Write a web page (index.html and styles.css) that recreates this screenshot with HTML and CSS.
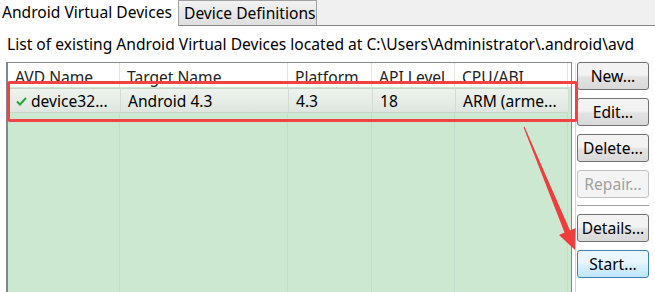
FILE: index.html
```html
<!DOCTYPE html>
<html lang="en">
<head>
  <meta charset="UTF-8" />
  <title>Android Virtual Device Manager</title>
  <link rel="stylesheet" href="styles.css">
</head>
<body>
  <div class="tabs">
    <div class="tab active">Android Virtual Devices</div>
    <div class="tab">Device Definitions</div>
    <div class="tab-rest"></div>
  </div>
  <div class="content">
    <div class="caption">List of existing Android Virtual Devices located at C:\Users\Administrator\.android\avd</div>
    <div class="main">
      <div class="table">
        <div class="row head">
          <div class="cell">AVD Name</div>
          <div class="cell">Target Name</div>
          <div class="cell">Platform</div>
          <div class="cell">API Level</div>
          <div class="cell">CPU/ABI</div>
          <div class="cell"></div>
        </div>
        <div class="row selected">
          <div class="cell">
            <svg class="check" width="11" height="9" viewBox="0 0 11 9"><polyline points="1,4.5 4,7.5 10,1" fill="none" stroke="#1fa833" stroke-width="2" /></svg>device32...
          </div>
          <div class="cell">Android 4.3</div>
          <div class="cell">4.3</div>
          <div class="cell">18</div>
          <div class="cell">ARM (arme...</div>
          <div class="cell"></div>
        </div>
        <div class="row body">
          <div class="cell"></div>
          <div class="cell"></div>
          <div class="cell"></div>
          <div class="cell"></div>
          <div class="cell"></div>
          <div class="cell"></div>
        </div>
      </div>
      <div class="buttons">
        <button class="btn">New...</button>
        <button class="btn">Edit...</button>
        <button class="btn">Delete...</button>
        <button class="btn" disabled>Repair...</button>
        <div class="sep"></div>
        <button class="btn">Details...</button>
        <button class="btn focus">Start...</button>
      </div>
    </div>
  </div>
  <div class="highlight"></div>
  <svg class="arrow" width="655" height="292" viewBox="0 0 655 292">
    <polygon points="523.5,127.2 524.5,126.8 570,230.4 575.6,228 575,250 559,235 564.5,232.6" fill="#f03c3c" />
  </svg>
</body>
</html>
```

FILE: styles.css
```css
* {
  box-sizing: border-box;
}
body {
  margin: 0;
  width: 655px;
  height: 292px;
  overflow: hidden;
  background: #fff;
  color: #000;
  font-family: "Noto Sans", "Open Sans", sans-serif;
  font-size: 15.6px;
}
.tabs {
  display: flex;
  height: 26px;
}
.tab {
  line-height: 25px;
  white-space: nowrap;
}
.tab.active {
  width: 178px;
  padding-left: 2px;
  background: #fff;
}
.tab:not(.active) {
  width: 139px;
  height: 26px;
  padding-left: 5px;
  border: 1px solid #a0a0a0;
  border-bottom-color: #888;
  background: linear-gradient(#f2f2f2, #dedede);
}
.tab-rest {
  flex: 1;
  background: #f0f0f0;
  border-bottom: 1px solid #888;
}
.content {
  padding: 8px 0 0 6px;
}
.caption {
  line-height: 21px;
  padding-left: 1px;
  white-space: nowrap;
}
.main {
  display: flex;
  gap: 5px;
  margin-top: 7px;
}
.table {
  width: 566px;
  height: 240px;
  border: 1px solid #828790;
  border-left-width: 2px;
  background: #cde8d0;
  display: flex;
  flex-direction: column;
}
.row {
  display: grid;
  grid-template-columns: 112px 168px 84px 83px 113px 1fr;
}
.cell {
  border-right: 1px solid #c4dccb;
  padding-left: 7px;
  white-space: nowrap;
  overflow: hidden;
}
.row.head {
  height: 24px;
  background: #fff;
  padding-top: 3px;
  line-height: 22px;
  color: #222;
}
.row.head .cell {
  border-right-color: #e3e3e3;
  margin-top: -3px;
  padding-top: 3px;
}
.row.selected {
  height: 25px;
  line-height: 25px;
  margin: 1px 2px 0 0;
  background: linear-gradient(#eef3ee, #dfe6df);
  border: 1px solid #c8d4c8;
  border-radius: 2px;
}
.row.selected .cell {
  border-right-color: #d4ddd4;
}
.row.body {
  flex: 1;
}
.check {
  margin: 0 4px 0 0;
  vertical-align: 1px;
}
.buttons {
  display: flex;
  flex-direction: column;
  gap: 8px;
  width: 72px;
}
.btn {
  height: 28px;
  padding: 0;
  font-family: inherit;
  font-size: 15.6px;
  color: #000;
  border: 1px solid #707070;
  border-radius: 3px;
  background: linear-gradient(#f3f3f3 45%, #e2e2e2 55%, #d9d9d9);
}
.btn:disabled {
  color: #a0a0a0;
  border-color: #c2c2c2;
  background: #f4f4f4;
}
.btn.focus {
  border-color: #3c7fb1;
  background: linear-gradient(#eaf6fd 45%, #d9f0fc 55%, #bee6fd);
}
.sep {
  height: 2px;
  margin: -1px 0;
  border-top: 1px solid #a0a0a0;
  border-bottom: 1px solid #fff;
}
.highlight {
  position: absolute;
  left: 7px;
  top: 81px;
  width: 571px;
  height: 41px;
  border: 3px solid #f04444;
  border-radius: 3px;
}
.arrow {
  position: absolute;
  left: 0;
  top: 0;
}
```
